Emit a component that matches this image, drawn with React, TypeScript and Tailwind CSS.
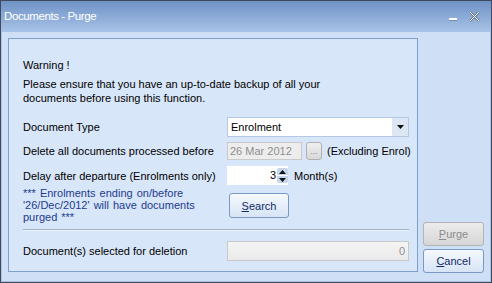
import React from "react";

const font = { fontFamily: '"Liberation Sans", Arial, sans-serif' };

function Btn({ children, disabled, className = "" }: { children: React.ReactNode; disabled?: boolean; className?: string }) {
  return (
    <div
      className={
        "flex items-center justify-center rounded-[3px] border text-[11px] " +
        (disabled
          ? "border-[#b3b3b3] bg-gradient-to-b from-[#ececec] to-[#d6d6d6] text-[#8c8c8c]"
          : "border-[#7a98c4] bg-gradient-to-b from-[#f6f9fe] to-[#d7e4f5] text-[#0f2a66]") +
        " " +
        className
      }
    >
      {children}
    </div>
  );
}

export default function App() {
  return (
    <div style={font} className="w-[492px] h-[283px] overflow-hidden bg-[#3f4a5a] p-px">
      <div className="w-full h-full flex flex-col bg-[#cfdff5]">
        {/* title */}
        <div className="h-[31px] shrink-0 flex items-center justify-between bg-gradient-to-b from-[#6f92c6] to-[#a8c3e7] pl-[3px] pr-[11px]">
          <span className="text-white text-[11.5px] tracking-[-0.4px] mt-[1px]">Documents - Purge</span>
          <div className="flex items-center gap-[12px]">
            <div className="w-[8px] h-[3px] border-t-2 border-b border-t-white border-b-[#7c8ea8] mt-[5px]" />
            <svg width="11" height="11" viewBox="0 0 11 11">
              <path d="M1 1 L10 10 M10 1 L1 10" stroke="#66768e" strokeWidth="2.2" />
              <path d="M1 1 L10 10 M10 1 L1 10" stroke="#ffffff" strokeWidth="1" />
            </svg>
          </div>
        </div>
        {/* body */}
        <div className="flex-1 flex border-x border-b border-[#a9c1e4] pl-[6px] pt-[6px]">
          <div className="w-[410px] h-[234px] border border-[#7f9fcf] bg-[#d8e6f9] pl-[14px] pr-[8px] pt-[19px] text-[11px] text-black leading-[14px]">
            <div className="h-[14px]">Warning !</div>
            <div className="mt-[5px] w-[352px]">
              Please ensure that you have an up-to-date backup of all your documents before using this function.
            </div>
            <div className="mt-[12px] flex items-center h-[20px]">
              <span className="w-[204px] shrink-0">Document Type</span>
              <div className="flex-1 h-[20px] flex bg-white border border-[#b6c9e2]">
                <span className="flex-1 pl-[3px] leading-[18px]">Enrolment</span>
                <div className="w-[16px] bg-[#dde7f4] flex items-center justify-center">
                  <svg width="7" height="5" viewBox="0 0 7 5"><path d="M0 0 H7 L3.5 4 Z" fill="#111" /></svg>
                </div>
              </div>
            </div>
            <div className="mt-[5px] flex items-center h-[18px] whitespace-nowrap">
              <span className="w-[204px] shrink-0">Delete all documents processed before</span>
              <div className="w-[75px] shrink-0 h-[18px] border border-[#c9c9c9] bg-[#ededed] text-[#8e8e8e] pl-[2px] leading-[16px]">26 Mar 2012</div>
              <div className="ml-[4px] shrink-0 w-[16px] h-[18px] rounded-[3px] border border-[#b0b0b0] bg-gradient-to-b from-[#f0f0f0] to-[#d8d8d8] text-[#888] text-[9px] flex items-center justify-center leading-none">...</div>
              <span className="ml-[5px]">(Excluding Enrol)</span>
            </div>
            <div className="mt-[6px] flex items-center h-[19px] whitespace-nowrap">
              <span className="w-[204px] shrink-0">Delay after departure (Enrolments only)</span>
              <div className="w-[61px] h-[19px] flex bg-white">
                <span className="flex-1 text-right pr-[1px] leading-[19px]">3</span>
                <div className="w-[11px] flex flex-col justify-center gap-[1px] py-[2px]">
                  <div className="flex-1 bg-[#c5d5ea] rounded-t-[2px] flex items-center justify-center">
                    <svg width="7" height="4" viewBox="0 0 7 4"><path d="M0 4 H7 L3.5 0 Z" fill="#111" /></svg>
                  </div>
                  <div className="flex-1 bg-[#c5d5ea] rounded-b-[2px] flex items-center justify-center">
                    <svg width="7" height="4" viewBox="0 0 7 4"><path d="M0 0 H7 L3.5 4 Z" fill="#111" /></svg>
                  </div>
                </div>
              </div>
              <span className="ml-[6px]">Month(s)</span>
            </div>
            <div className="flex mt-[2px]">
              <div className="w-[206px] text-[#1d3b8f] leading-[12px] [word-spacing:1px]">
                <div>*** Enrolments ending on/before</div>
                <div>'26/Dec/2012' will have documents</div>
                <div>purged ***</div>
              </div>
              <Btn className="mt-[6px] w-[60px] h-[25px]">
                <span><span className="underline">S</span>earch</span>
              </Btn>
            </div>
            <div className="mt-[6px] h-[2px] border-t border-[#9fb0c8] border-b border-b-[#eef4fc]" />
            <div className="mt-[10px] flex items-center h-[20px]">
              <span className="w-[204px] shrink-0">Document(s) selected for deletion</span>
              <div className="flex-1 h-[20px] border border-[#c8c8c8] bg-gradient-to-b from-[#f4f4f4] to-[#ebebeb] text-[#8e8e8e] text-right pr-[3px] leading-[18px]">0</div>
            </div>
          </div>
          <div className="flex-1 flex flex-col justify-end items-start pl-[5px] pb-[8px] gap-[3px]">
            <Btn disabled className="w-[61px] h-[24px]">
              <span><span className="underline">P</span>urge</span>
            </Btn>
            <Btn className="w-[61px] h-[24px]">
              <span><span className="underline">C</span>ancel</span>
            </Btn>
          </div>
        </div>
      </div>
    </div>
  );
}
